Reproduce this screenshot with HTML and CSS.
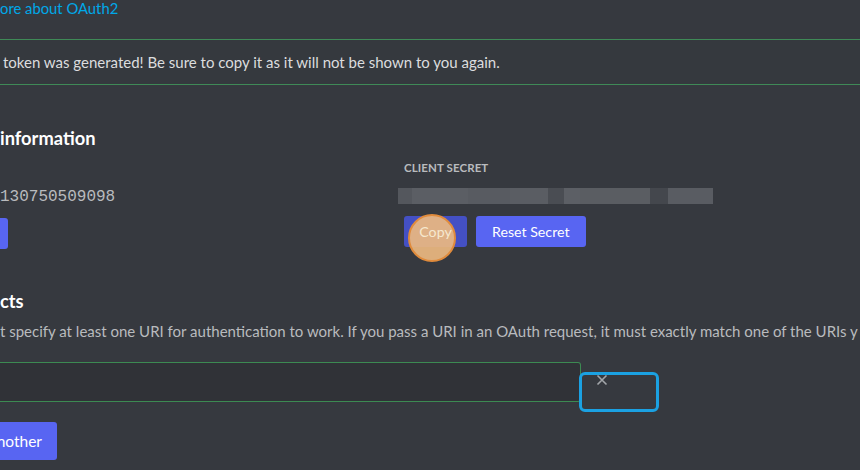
FILE: index.html
```html
<!DOCTYPE html>
<html>
<head>
<meta charset="utf-8">
<link rel="stylesheet" href="styles.css">
</head>
<body>
<div class="page">
  <a class="link">ore about OAuth2</a>
  <div class="banner">token was generated! Be sure to copy it as it will not be shown to you again.</div>
  <h2 class="heading info">information</h2>
  <div class="cols">
    <div class="col left">
      <div class="label">&nbsp;</div>
      <div class="mono">130750509098</div>
      <div class="btns"><span class="btn stub"></span></div>
    </div>
    <div class="col right">
      <div class="label">Client Secret</div>
      <div class="secret">
        <span class="b b1"></span><span class="b b2"></span><span class="b b3"></span><span class="b b4"></span><span class="b b5"></span><span class="b b6"></span><span class="b b7"></span><span class="b b8"></span><span class="b b9"></span>
      </div>
      <div class="btns">
        <span class="btn pressed"><span class="click"></span><span class="btn-text">Copy</span></span>
        <span class="btn">Reset Secret</span>
      </div>
    </div>
  </div>
  <h2 class="heading redir">cts</h2>
  <p class="desc">t specify at least one URI for authentication to work. If you pass a URI in an OAuth request, it must exactly match one of the URIs y</p>
  <div class="uri-row">
    <div class="input"></div>
    <div class="remove">
      <svg width="12" height="12" viewBox="0 0 12 12"><path d="M1.5 1.5 L10.5 10.5 M10.5 1.5 L1.5 10.5" stroke="#a3a6aa" stroke-width="1.6" fill="none"/></svg>
      <span class="focus"></span>
    </div>
  </div>
  <span class="btn add">nother</span>
</div>
</body>
</html>
```

FILE: styles.css
```css
html, body {
  margin: 0;
  padding: 0;
  background: #36393f;
  width: 860px;
  height: 470px;
  overflow: hidden;
  font-family: Lato, "Noto Sans", sans-serif;
}
.page {
  display: flex;
  flex-direction: column;
  align-items: flex-start;
}
.link {
  color: #00a8e8;
  font-size: 14.8px;
  line-height: 18px;
  margin-top: -1px;
  white-space: nowrap;
}
.banner {
  align-self: stretch;
  margin-top: 22px;
  height: 44px;
  border-top: 1px solid #3f8a57;
  border-bottom: 1px solid #3f8a57;
  background: #35393e;
  color: #dcddde;
  font-size: 15px;
  line-height: 44px;
  padding-left: 3px;
  white-space: nowrap;
}
.heading {
  margin: 0;
  color: #ffffff;
  font-size: 18.3px;
  font-weight: 700;
  line-height: 24px;
  white-space: nowrap;
}
.info { margin-top: 41px; }
.cols {
  display: grid;
  grid-template-columns: 404px 400px;
  margin-top: 10px;
}
.col {
  display: flex;
  flex-direction: column;
}
.label {
  height: 16px;
  font-size: 11.5px;
  font-weight: 700;
  line-height: 16px;
  text-transform: uppercase;
  color: #b9bbbe;
  letter-spacing: 0.1px;
}
.mono {
  font-family: "Liberation Mono", "DejaVu Sans Mono", monospace;
  font-size: 16px;
  color: #b9bbbe;
  margin-top: 12px;
  line-height: 18px;
}
.secret {
  margin-top: 12px;
  margin-left: -6px;
  height: 16px;
  display: flex;
}
.b { height: 16px; display: block; }
.b1 { width: 14px; background: #54575d; }
.b2 { width: 56px; background: #5b5e64; }
.b3 { width: 42px; background: #585b61; }
.b4 { width: 38px; background: #5a5d63; }
.b5 { width: 16px; background: #4a4d53; }
.b6 { width: 16px; background: #5c5f65; }
.b7 { width: 70px; background: #5a5d62; }
.b8 { width: 18px; background: #44474d; }
.b9 { width: 45px; background: #595c62; }
.btns {
  margin-top: 12px;
  display: flex;
  gap: 9px;
}
.btn {
  position: relative;
  display: inline-flex;
  align-items: center;
  justify-content: center;
  height: 31px;
  padding: 0 16px;
  background: #5865f2;
  color: #ffffff;
  font-size: 14.2px;
  border-radius: 3px;
  box-sizing: border-box;
  white-space: nowrap;
}
.btn.stub { width: 8px; padding: 0; border-radius: 0 3px 3px 0; }
.btn.pressed {
  background: #4450c4;
  width: 63px;
  padding: 0;
}
.click {
  position: absolute;
  left: 4px;
  top: -2px;
  width: 48px;
  height: 48px;
  border-radius: 50%;
  background: rgba(236, 184, 128, 0.92);
  border: 2px solid #e08b3c;
  box-sizing: border-box;
}
.btn-text {
  position: relative;
  color: #f6e8cf;
}
.redir { margin-top: 40px; }
.desc {
  margin: 9px 0 0 0;
  color: #b9bbbe;
  font-size: 15px;
  line-height: 18px;
  white-space: nowrap;
}
.uri-row {
  display: flex;
  margin-top: 22px;
}
.input {
  width: 580px;
  height: 38px;
  border: 1px solid #3c8a52;
  border-left: none;
  background: #303237;
  border-radius: 0 3px 3px 0;
}
.remove {
  position: relative;
  width: 40px;
  height: 40px;
  display: flex;
  justify-content: center;
  padding-top: 13px;
  box-sizing: border-box;
}
.remove svg { margin-top: -1px; margin-left: 1px; }
.focus {
  position: absolute;
  left: -2px;
  top: 10px;
  width: 80px;
  height: 40px;
  border: 3px solid #1ba1e2;
  border-radius: 6px;
  box-sizing: border-box;
}
.add {
  margin-top: 20px;
  height: 38px;
  width: 57px;
  padding: 0;
  justify-content: flex-end;
  padding-right: 15px;
  font-size: 15.5px;
  border-radius: 0 3px 3px 0;
}
```
